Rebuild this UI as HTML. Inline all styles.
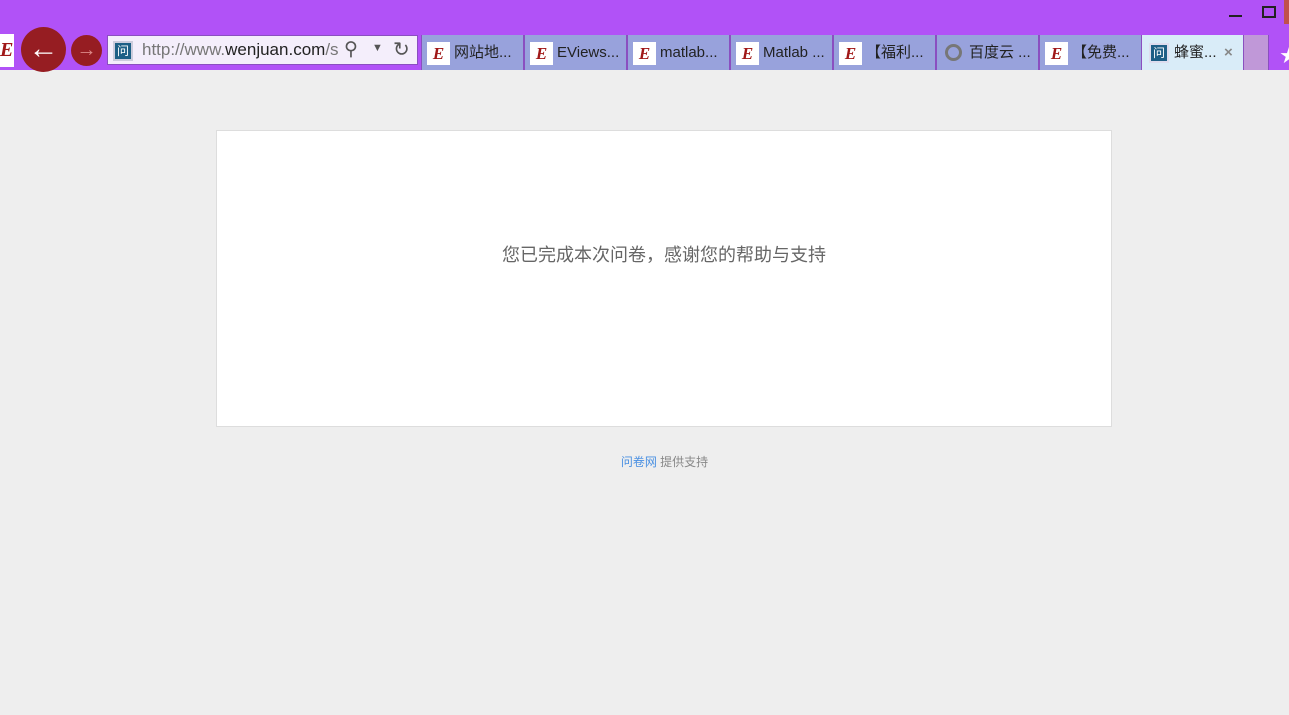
<!DOCTYPE html><html><head><meta charset="utf-8"><style>
*{margin:0;padding:0;box-sizing:border-box}
body{width:1289px;height:715px;overflow:hidden;background:#eeeeee;font-family:"Liberation Sans","Noto Sans CJK SC",sans-serif;position:relative}
.top{position:absolute;left:0;top:0;width:1289px;height:70px;background:#b152f7}
.a{position:absolute}
.tab{position:absolute;top:35px;height:35px;width:103px;background:#98a2dc;border-left:1px solid #8a4fc0;border-right:1px solid #8a4fc0;font-size:15px;color:#222;line-height:35px;padding-left:32px;white-space:nowrap;overflow:hidden}
.ei{position:absolute;left:5px;top:7px;width:23px;height:23px;background:#fff;color:#a01818;font:italic bold 17px "Liberation Serif",serif;line-height:23px;text-align:center}
.wi{position:absolute;left:7px;top:8px;width:20px;height:20px;background:#1d5f86;border:2px solid #dde;color:#fff;font-size:12px;line-height:16px;text-align:center}
</style></head><body>
<div class="top"></div>
<div class="a" style="left:1229px;top:15px;width:13px;height:2px;background:#222"></div>
<div class="a" style="left:1262px;top:6px;width:14px;height:12px;border:2px solid #222"></div>
<div class="a" style="left:1284px;top:0;width:5px;height:24px;background:#c0504d"></div>
<div class="a" style="left:0;top:34px;width:14px;height:33px;background:#fff;color:#a01818;font:italic bold 20px 'Liberation Serif',serif;line-height:33px">E</div>
<div class="a" style="left:21px;top:27px;width:45px;height:45px;border-radius:50%;background:#961d22;color:#fff;font-size:30px;line-height:43px;text-align:center;font-weight:bold">&#8592;</div>
<div class="a" style="left:71px;top:35px;width:31px;height:31px;border-radius:50%;background:#961d22;color:#d88;font-size:20px;line-height:30px;text-align:center;font-weight:bold">&#8594;</div>
<div class="a" style="left:107px;top:35px;width:311px;height:30px;background:#f4eefb;border:1px solid #8a4fc0"></div>
<div class="a" style="left:113px;top:41px;width:20px;height:20px;background:#1d5f86;border:2px solid #ccd;color:#fff;font-size:12px;line-height:16px;text-align:center">问</div>
<div class="a" style="left:142px;top:40px;font-size:17px;color:#777;white-space:nowrap;width:196px;overflow:hidden">http://www.<span style="color:#222">wenjuan.com</span>/s</div>
<div class="a" style="left:344px;top:38px;font-size:19px;color:#555">&#9906;</div>
<div class="a" style="left:372px;top:42px;font-size:11px;color:#555">&#9660;</div>
<div class="a" style="left:393px;top:37px;font-size:20px;color:#555">&#8635;</div>
<div class="tab" style="left:421px"><span class="ei">E</span>网站地...</div>
<div class="tab" style="left:524px"><span class="ei">E</span>EViews...</div>
<div class="tab" style="left:627px"><span class="ei">E</span>matlab...</div>
<div class="tab" style="left:730px"><span class="ei">E</span>Matlab ...</div>
<div class="tab" style="left:833px"><span class="ei">E</span>【福利...</div>
<div class="tab" style="left:936px"><span style="position:absolute;left:8px;top:9px;width:17px;height:17px;border-radius:50%;border:3px solid #777"></span>百度云 ...</div>
<div class="tab" style="left:1039px"><span class="ei">E</span>【免费...</div>
<div class="tab" style="left:1141px;background:#d9ecf8"><span class="wi">问</span>蜂蜜...<span style="position:absolute;left:82px;color:#888;font-weight:bold">×</span></div>
<div class="tab" style="left:1243px;width:26px;background:#c098d8;padding:0"></div>
<div class="a" style="left:1280px;top:42px;color:#fff;font-size:18px">★</div>
<div class="a" style="left:216px;top:130px;width:896px;height:297px;background:#fff;border:1px solid #ddd"></div>
<div class="a" style="left:216px;top:241px;width:896px;text-align:center;font-size:18px;color:#666">您已完成本次问卷，感谢您的帮助与支持</div>
<div class="a" style="left:0;top:453px;width:1329px;text-align:center;font-size:12px;color:#888"><span style="color:#4a90e2">问卷网</span> 提供支持</div>
</body></html>
